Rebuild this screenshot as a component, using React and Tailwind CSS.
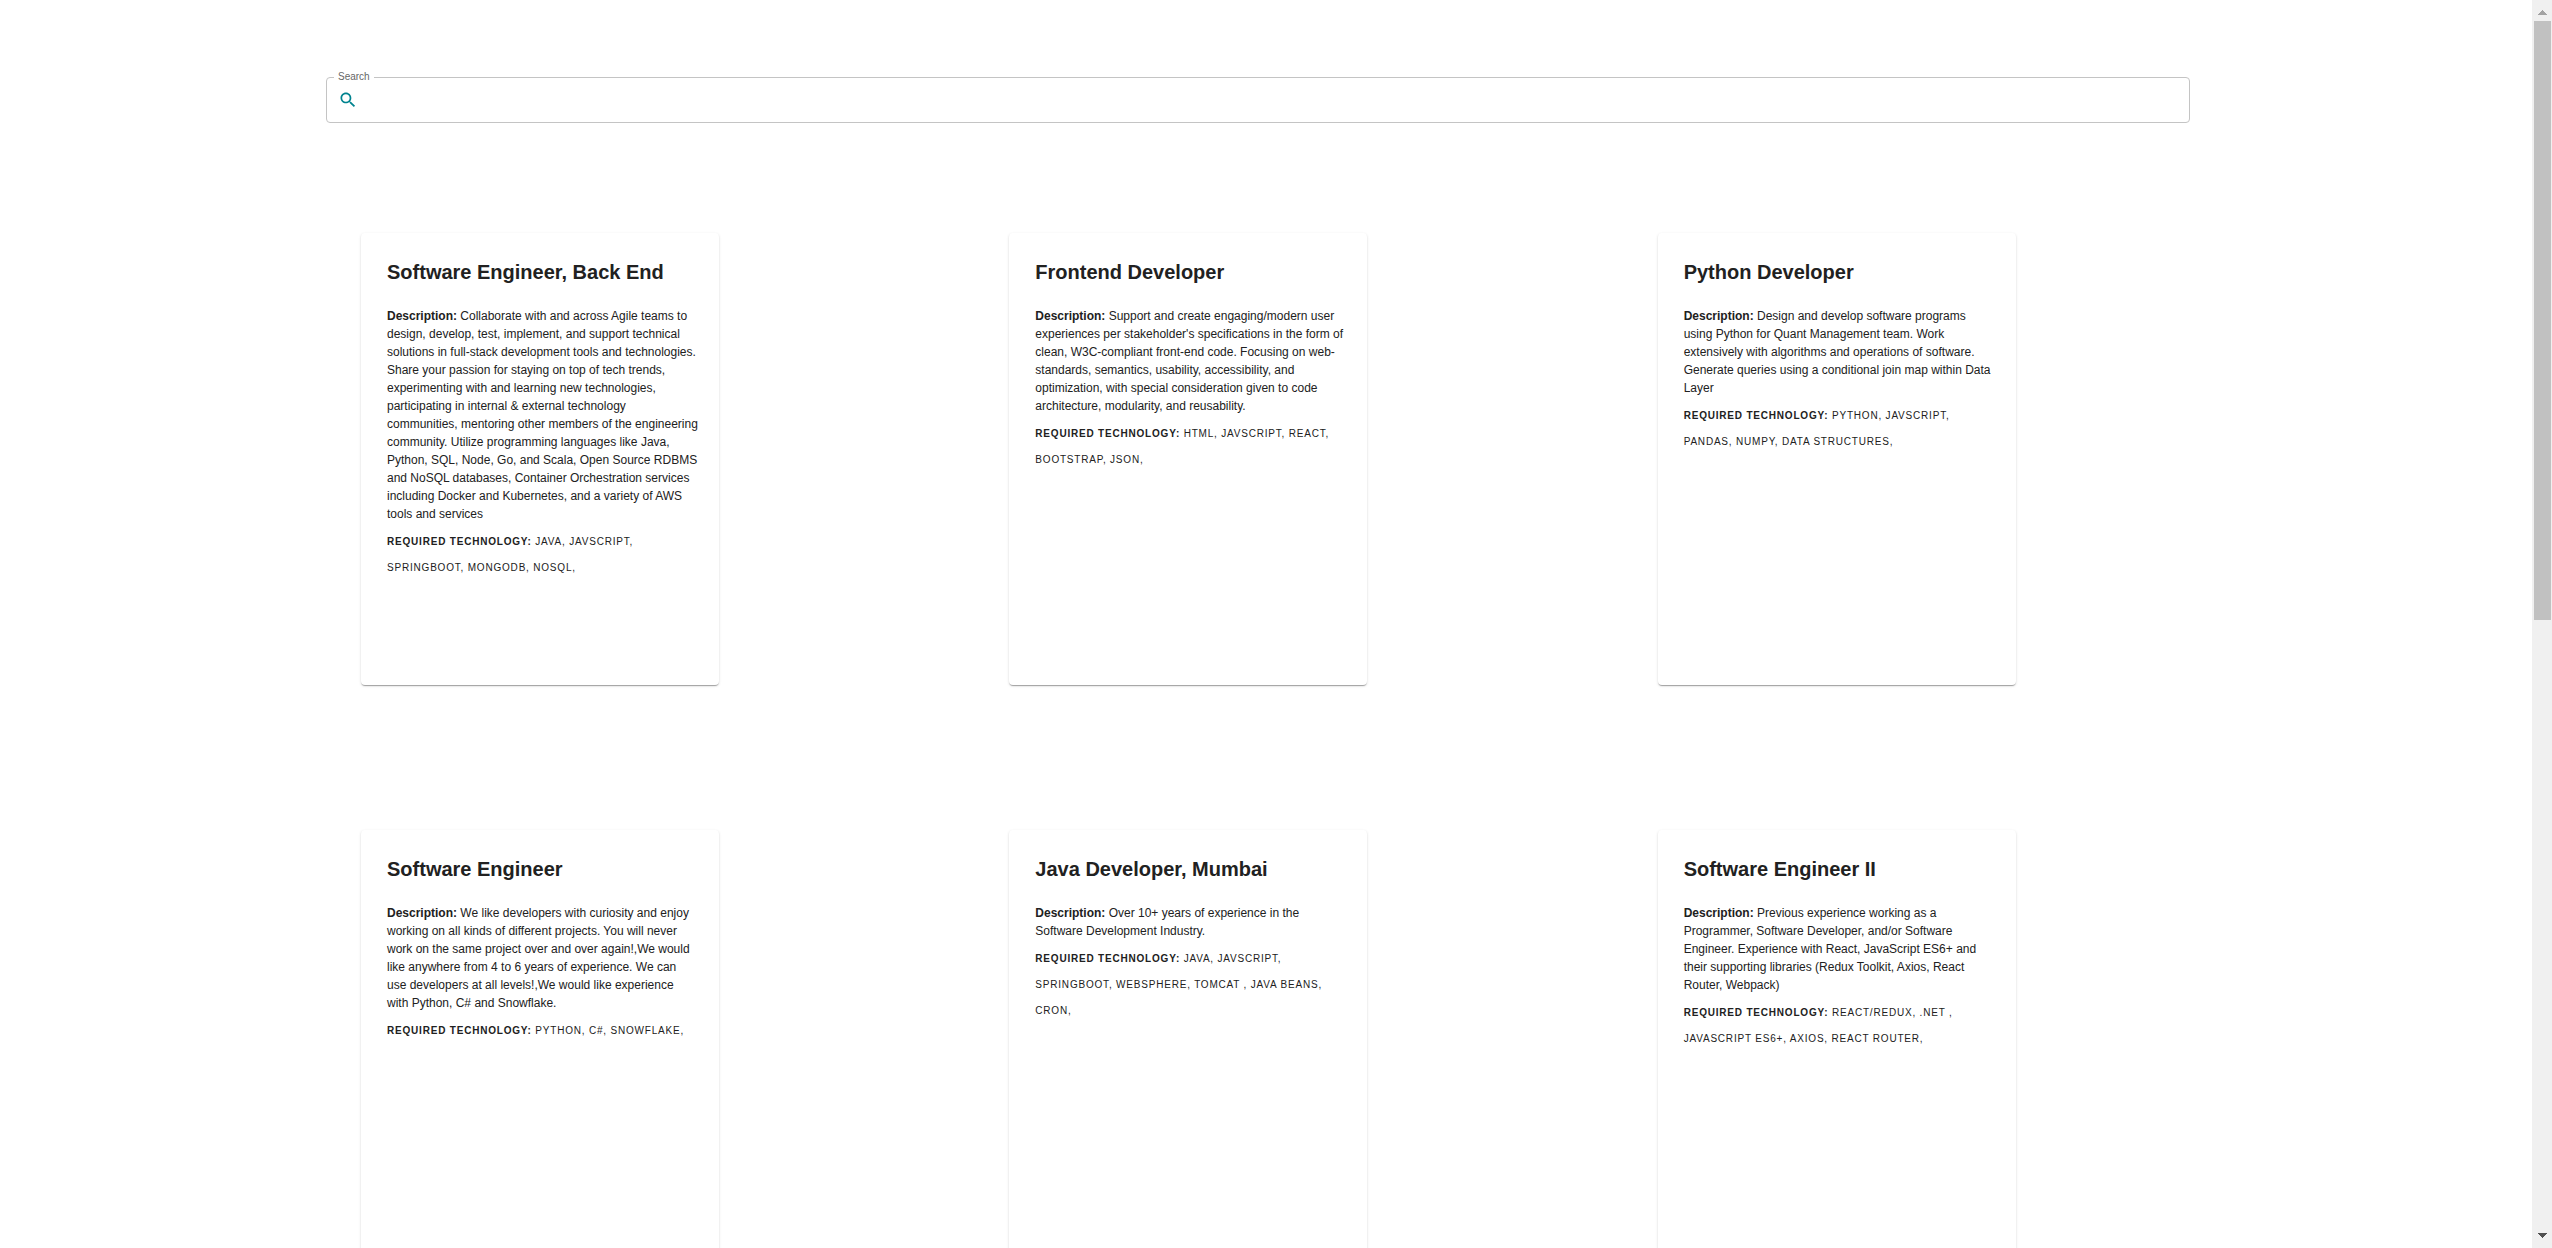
const JOBS = [
  {
    title: "Software Engineer, Back End",
    description:
      "Collaborate with and across Agile teams to design, develop, test, implement, and support technical solutions in full-stack development tools and technologies. Share your passion for staying on top of tech trends, experimenting with and learning new technologies, participating in internal & external technology communities, mentoring other members of the engineering community. Utilize programming languages like Java, Python, SQL, Node, Go, and Scala, Open Source RDBMS and NoSQL databases, Container Orchestration services including Docker and Kubernetes, and a variety of AWS tools and services",
    technology: ["Java", "Javscript", "SpringBoot", "MongoDB", "NoSQL"],
  },
  {
    title: "Frontend Developer",
    description:
      "Support and create engaging/modern user experiences per stakeholder's specifications in the form of clean, W3C-compliant front-end code. Focusing on web-standards, semantics, usability, accessibility, and optimization, with special consideration given to code architecture, modularity, and reusability.",
    technology: ["HTML", "Javscript", "React", "Bootstrap", "JSON"],
  },
  {
    title: "Python Developer",
    description:
      "Design and develop software programs using Python for Quant Management team. Work extensively with algorithms and operations of software. Generate queries using a conditional join map within Data Layer",
    technology: ["Python", "Javscript", "Pandas", "Numpy", "Data Structures"],
  },
  {
    title: "Software Engineer",
    description:
      "We like developers with curiosity and enjoy working on all kinds of different projects. You will never work on the same project over and over again!,We would like anywhere from 4 to 6 years of experience. We can use\u00a0developers at all levels!,We would like experience with\u00a0Python, C# and Snowflake.",
    technology: ["Python", "C#", "Snowflake"],
  },
  {
    title: "Java Developer, Mumbai",
    description: "Over 10+ years of experience in the Software Development Industry.",
    technology: ["Java", "Javscript", "SpringBoot", "Websphere", "Tomcat ", "Java Beans", "CRON"],
  },
  {
    title: "Software Engineer II",
    description:
      "Previous experience working as a Programmer, Software Developer, and/or Software Engineer. Experience with React, JavaScript ES6+ and their supporting libraries (Redux Toolkit, Axios, React Router, Webpack)",
    technology: ["React/Redux", ".NET ", "JavaScript ES6+", "Axios", "React Router"],
  },
];

function SearchField() {
  return (
    <fieldset className="rounded border border-[#c4c4c4] px-[11px] pb-2">
      <legend className="-ml-1 px-1 text-[10px] leading-[10px] text-[#666666]">
        <label htmlFor="job-search">Search</label>
      </legend>
      <div className="flex h-8 items-center gap-2">
        <svg viewBox="0 0 24 24" className="mt-1 size-5 shrink-0 fill-[#00838f]" aria-hidden="true">
          <path d="M15.5 14h-.79l-.28-.27C15.41 12.59 16 11.11 16 9.5 16 5.91 13.09 3 9.5 3S3 5.91 3 9.5 5.91 16 9.5 16c1.61 0 3.09-.59 4.23-1.57l.27.28v.79l5 4.99L20.49 19l-4.99-5zm-6 0C7.01 14 5 11.99 5 9.5S7.01 5 9.5 5 14 7.01 14 9.5 11.99 14 9.5 14z" />
        </svg>
        <input id="job-search" type="text" className="min-w-0 flex-1 text-[13px] outline-none" />
      </div>
    </fieldset>
  );
}

function JobCard({ title, description, technology }) {
  return (
    <article className="min-h-[452px] w-[358px] rounded bg-white py-6 pr-5 pl-[26px] shadow-[0_2px_1px_-1px_rgba(0,0,0,0.2),0_1px_1px_0_rgba(0,0,0,0.14),0_1px_3px_0_rgba(0,0,0,0.12)]">
      <h2 className="mb-5 text-xl leading-[30px] font-bold">{title}</h2>
      <p className="text-xs leading-[18px]">
        <strong>Description: </strong>
        {description}
      </p>
      <p className="mt-1.5 text-[10px] leading-[26px] tracking-[0.08em] uppercase">
        <strong>Required Technology: </strong>
        {technology.map((name) => `${name}, `).join("")}
      </p>
    </article>
  );
}

function ScrollTrack() {
  return (
    <aside className="flex w-5 shrink-0 flex-col items-center bg-[#f0f0f0]" aria-hidden="true">
      <div className="flex h-[21px] items-center justify-center">
        <svg viewBox="0 0 9 5" className="mt-1 h-[5px] w-[9px] fill-[#a3a3a3]">
          <path d="M4 0h1v1h1v1h1v1h1v1h1v1H0V4h1V3h1V2h1V1h1z" />
        </svg>
      </div>
      <div className="h-[48%] w-[17px] bg-[#c1c1c1]" />
      <div className="mt-auto flex h-[21px] items-center justify-center">
        <svg viewBox="0 0 9 5" className="mb-1 h-[5px] w-[9px] fill-[#505050]">
          <path d="M0 0h9v1H8v1H7v1H6v1H5v1H4V4H3V3H2V2H1V1H0z" />
        </svg>
      </div>
    </aside>
  );
}

export default function App() {
  return (
    <div className="flex h-screen overflow-hidden bg-white font-['Liberation_Sans',Arial,sans-serif] text-[#212121]">
      <main className="min-w-0 flex-1 overflow-hidden">
        <div className="mr-[342px] ml-[326px] pt-[72px]">
          <SearchField />
        </div>
        <section className="mt-[110px] mr-[226px] ml-[361px] grid grid-cols-3 gap-y-[145px]">
          {JOBS.map((job) => (
            <JobCard key={job.title} {...job} />
          ))}
        </section>
      </main>
      <ScrollTrack />
    </div>
  );
}
